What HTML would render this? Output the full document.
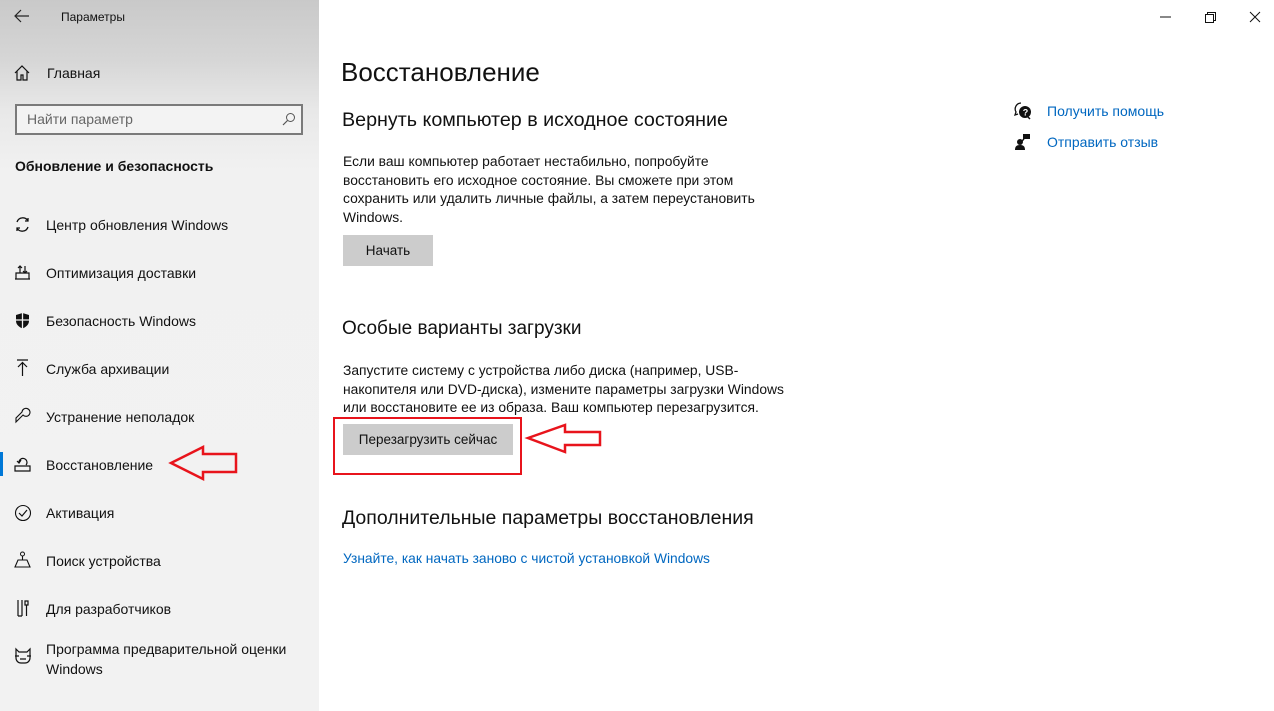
<!DOCTYPE html>
<html><head><meta charset="utf-8"><style>
*{margin:0;padding:0;box-sizing:border-box}
body{width:1274px;height:711px;overflow:hidden;background:#fff;font-family:"Liberation Sans",sans-serif;color:#000;position:relative}
.sb{position:absolute;left:0;top:0;width:319px;height:711px;background:linear-gradient(180deg,#c9c9c9 0px,#d6d6d6 60px,#e8e8e8 110px,#f1f1f1 170px,#f2f2f2 711px)}
.a{position:absolute;white-space:nowrap}
.it{position:absolute;left:46px;font-size:14px;color:#111}
.ic{position:absolute;left:14px}
.p{line-height:18.5px;color:#111;position:absolute;left:343px;white-space:nowrap}
.btn{position:absolute;background:#cccccc;font-size:13.5px;color:#111;text-align:center}
.lk{color:#0067c0;font-size:14px}
</style></head><body>
<div class="sb"></div>
<svg class="a" style="left:14px;top:9px" width="16" height="14" viewBox="0 0 16 14"><path d="M15 7H2M7 1L1 7l6 6" fill="none" stroke="#222" stroke-width="1.2"/></svg>
<div class="a" style="left:61px;top:10px;font-size:12px;color:#111">Параметры</div>
<svg class="ic" style="top:65px" width="16" height="16" viewBox="0 0 16 16"><path d="M1 8L8 1l7 7M3 6v9h4v-5h2v5h4V6" fill="none" stroke="#111" stroke-width="1.2"/></svg>
<div class="it" style="left:47px;top:65px">Главная</div>
<div class="a" style="left:15px;top:104px;width:288px;height:31px;border:2px solid #7a7a7a;background:#f3f3f3"></div>
<div class="a" style="left:27px;top:111px;font-size:14px;color:#666">Найти параметр</div>
<svg class="a" style="left:282px;top:112px" width="14" height="14" viewBox="0 0 14 14"><circle cx="8.5" cy="5.5" r="4" fill="none" stroke="#555" stroke-width="1"/><path d="M5.5 8.5L1 13" stroke="#555" stroke-width="1.2"/></svg>
<div class="a" style="left:15px;top:158px;font-size:14px;font-weight:bold;color:#111">Обновление и безопасность</div>

<svg class="ic" style="top:216px" width="17" height="17" viewBox="0 0 17 17"><path d="M3 6A6 6 0 0 1 14 5M14 11A6 6 0 0 1 3 12" fill="none" stroke="#111" stroke-width="1.3"/><path d="M14 2v3h-3M3 15v-3h3" fill="none" stroke="#111" stroke-width="1.3"/></svg>
<div class="it" style="top:217px">Центр обновления Windows</div>
<svg class="ic" style="top:264px" width="17" height="17" viewBox="0 0 17 17"><path d="M1 15h15M2 15V9h13v6M6 9V2M4 4l2-2 2 2M11 9V2M9 7l2 2 2-2" fill="none" stroke="#111" stroke-width="1.2"/></svg>
<div class="it" style="top:265px">Оптимизация доставки</div>
<svg class="ic" style="top:312px" width="17" height="17" viewBox="0 0 17 17"><path d="M8.5 1L15 3v6c0 4-4 6.5-6.5 7.5C6 15.5 2 13 2 9V3z" fill="#111"/><path d="M8.5 1v15.5M2 8h13" stroke="#f2f2f2" stroke-width="1.3"/></svg>
<div class="it" style="top:313px">Безопасность Windows</div>
<svg class="ic" style="top:359px" width="17" height="18" viewBox="0 0 17 18"><path d="M3 1h11M8.5 4v13M4 8l4.5-4.5L13 8" fill="none" stroke="#111" stroke-width="1.2"/></svg>
<div class="it" style="top:361px">Служба архивации</div>
<svg class="ic" style="top:407px" width="17" height="17" viewBox="0 0 17 17"><path d="M2 15l7-7a4 4 0 1 0-1-3l-6 6v4z" fill="none" stroke="#111" stroke-width="1.1"/></svg>
<div class="it" style="top:409px">Устранение неполадок</div>
<div class="a" style="left:0;top:452px;width:3px;height:24px;background:#0078d7"></div>
<svg class="ic" style="top:455px" width="17" height="17" viewBox="0 0 17 17"><path d="M5 8a4 4 0 1 1 7 2M1 11h15v5H1zM7 5l-2 3-2-2" fill="none" stroke="#111" stroke-width="1.2"/></svg>
<div class="it" style="top:457px">Восстановление</div>
<svg class="ic" style="top:504px" width="18" height="18" viewBox="0 0 18 18"><circle cx="9" cy="9" r="7.5" fill="none" stroke="#111" stroke-width="1.1"/><path d="M5 9l3 3 5-6" fill="none" stroke="#111" stroke-width="1.2"/></svg>
<div class="it" style="top:505px">Активация</div>
<svg class="ic" style="top:551px" width="17" height="18" viewBox="0 0 17 18"><circle cx="8.5" cy="3" r="2" fill="none" stroke="#111"/><path d="M8.5 5v4M4 9h9l3 7H1z" fill="none" stroke="#111" stroke-width="1.1"/></svg>
<div class="it" style="top:553px">Поиск устройства</div>
<svg class="ic" style="top:599px" width="17" height="18" viewBox="0 0 17 18"><path d="M4 1v16M4 17h4M8 1v16M11 2h3v4h-3zM12.5 6v11" fill="none" stroke="#111" stroke-width="1.2"/></svg>
<div class="it" style="top:601px">Для разработчиков</div>
<svg class="ic" style="top:647px" width="18" height="18" viewBox="0 0 18 18"><path d="M2 2l3 3h8l3-3v9a5 5 0 0 1-5 5H7a5 5 0 0 1-5-5zM1 9h4M13 9h4M6 12h6" fill="none" stroke="#111" stroke-width="1.2"/></svg>
<div class="it" style="top:639px;line-height:20px">Программа предварительной оценки<br>Windows</div>

<svg class="a" style="left:168px;top:444px" width="72" height="40" viewBox="168 444 72 40"><path d="M171 463L203 447v7h33v18h-33v7z" fill="none" stroke="#e8141c" stroke-width="2.5"/></svg>

<svg class="a" style="left:1155px;top:10px" width="110" height="14"><path d="M5 7h11" stroke="#111"/><path d="M50.5 4.5h8v8h-8zM52.5 4.5v-2h8v8h-2" fill="none" stroke="#111"/><path d="M95 2l10 10M105 2L95 12" stroke="#111"/></svg>

<div class="a" style="left:341px;top:57px;font-size:26px;font-weight:300;color:#111">Восстановление</div>
<div class="a" style="left:342px;top:109px;font-size:19.7px;color:#111">Вернуть компьютер в исходное состояние</div>
<div class="p" style="top:152px;font-size:13.85px">Если ваш компьютер работает нестабильно, попробуйте<br>восстановить его исходное состояние. Вы сможете при этом<br>сохранить или удалить личные файлы, а затем переустановить<br>Windows.</div>
<div class="btn" style="left:343px;top:235px;width:90px;height:31px;line-height:31px">Начать</div>
<div class="a" style="left:342px;top:318px;font-size:19px;color:#111">Особые варианты загрузки</div>
<div class="p" style="top:361px;font-size:13.85px">Запустите систему с устройства либо диска (например, USB-<br>накопителя или DVD-диска), измените параметры загрузки Windows<br>или восстановите ее из образа. Ваш компьютер перезагрузится.</div>
<div class="btn" style="left:343px;top:424px;width:170px;height:31px;line-height:31px">Перезагрузить сейчас</div>
<div class="a" style="left:333px;top:417px;width:189px;height:58px;border:2.5px solid #e8141c"></div>
<svg class="a" style="left:524px;top:422px" width="80" height="34" viewBox="524 422 80 34"><path d="M528 438L565 425v7h35v13h-35v7z" fill="none" stroke="#e8141c" stroke-width="2.5"/></svg>
<div class="a" style="left:342px;top:507px;font-size:19.5px;color:#111">Дополнительные параметры восстановления</div>
<div class="a lk" style="left:343px;top:551px;font-size:13.8px">Узнайте, как начать заново с чистой установкой Windows</div>

<svg class="a" style="left:1014px;top:102px" width="18" height="18" viewBox="0 0 18 18"><path d="M7 1a6 6 0 0 0-5 9l-1 3 3-1" fill="none" stroke="#111" stroke-width="1.3"/><circle cx="11" cy="10" r="6" fill="#111"/><text x="8.7" y="13.5" font-size="9" font-weight="bold" fill="#fff" font-family="Liberation Sans">?</text><path d="M14 15l2 2" stroke="#111" stroke-width="1.5"/></svg>
<div class="a lk" style="left:1047px;top:103px">Получить помощь</div>
<svg class="a" style="left:1015px;top:133px" width="16" height="17" viewBox="0 0 16 17"><rect x="8" y="1" width="7" height="5" fill="#111"/><path d="M9 6l-2 2" stroke="#111" stroke-width="1.5"/><circle cx="5" cy="9" r="3" fill="#111"/><path d="M0 17c0-4 2-5 5-5s5 1 5 5z" fill="#111"/></svg>
<div class="a lk" style="left:1047px;top:134px">Отправить отзыв</div>
</body></html>
